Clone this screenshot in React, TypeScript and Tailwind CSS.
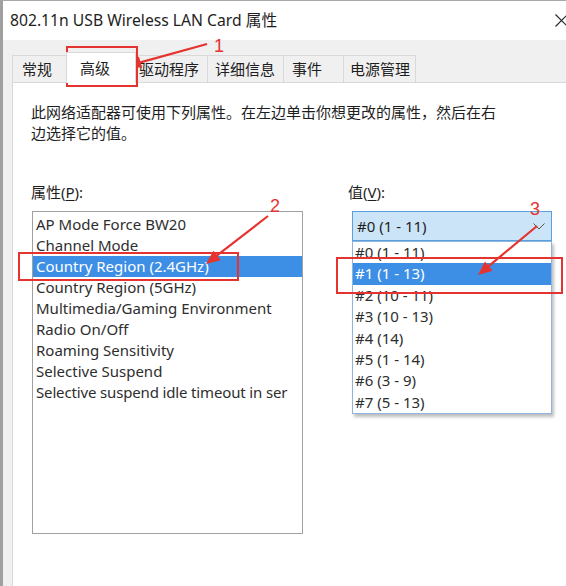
import React from "react";

type Arrow = { sx: number; sy: number; tx: number; ty: number };

function ArrowShape({ sx, sy, tx, ty }: Arrow) {
  const dx = tx - sx;
  const dy = ty - sy;
  const len = Math.hypot(dx, dy);
  const ux = dx / len;
  const uy = dy / len;
  const px = -uy;
  const py = ux;
  const hl = 14;
  const hw = 6;
  const bx = tx - hl * ux;
  const by = ty - hl * uy;
  const pts = `${tx},${ty} ${bx + hw * px},${by + hw * py} ${bx - hw * px},${by - hw * py}`;
  return (
    <g>
      <line x1={sx} y1={sy} x2={bx + 2 * ux} y2={by + 2 * uy} stroke="#e5332f" strokeWidth={2.2} />
      <polygon points={pts} fill="#e5332f" />
    </g>
  );
}

const tabs = [
  { label: "常规", w: "w-[54px]", pl: "pl-[9px]" },
  { label: "高级", w: "w-[70px]", pl: "pl-[13px]", sel: true },
  { label: "驱动程序", w: "w-[71px]", pl: "pl-[2px]" },
  { label: "详细信息", w: "w-[76px]", pl: "pl-[7px]" },
  { label: "事件", w: "w-[60px]", pl: "pl-[8px]" },
  { label: "电源管理", w: "w-[73px]", pl: "pl-[6px]" },
];

const props = [
  "AP Mode Force BW20",
  "Channel Mode",
  "Country Region (2.4GHz)",
  "Country Region (5GHz)",
  "Multimedia/Gaming Environment",
  "Radio On/Off",
  "Roaming Sensitivity",
  "Selective Suspend",
  "Selective suspend idle timeout in ser",
];

const values = [
  "#0 (1 - 11)",
  "#1 (1 - 13)",
  "#2 (10 - 11)",
  "#3 (10 - 13)",
  "#4 (14)",
  "#5 (1 - 14)",
  "#6 (3 - 9)",
  "#7 (5 - 13)",
];

export default function App() {
  return (
    <div className="relative w-[566px] h-[586px] overflow-hidden bg-[#f0f0f0] border-t border-t-[#a8a8a8] border-l-[3px] border-l-[#a0a0a0] flex flex-col text-[15px] text-[#1e1e1e] font-[family-name:'Noto_Sans','Noto_Sans_CJK_SC',sans-serif]">
      {/* Title bar */}
      <div className="h-[39px] shrink-0 bg-white flex items-center pl-[7px]">
        <span className="leading-none text-[15.7px]">802.11n USB Wireless LAN Card 属性</span>
        <svg className="ml-auto mr-[-2px]" width="13" height="13" viewBox="0 0 13 13">
          <path d="M0.5 0.5 L12.5 12.5 M12.5 0.5 L0.5 12.5" stroke="#2a2a2a" strokeWidth="1.2" fill="none" />
        </svg>
      </div>

      {/* Tab strip */}
      <div className="h-[42px] shrink-0 flex items-end pl-[9px]">
        {tabs.map((t, i) =>
          t.sel ? (
            <div
              key={i}
              className={`relative z-10 ${t.w} ${t.pl} h-[31px] mb-[-1px] bg-white border-t border-l border-r border-[#d9d9d9] flex items-center`}
            >
              {t.label}
            </div>
          ) : (
            <div
              key={i}
              className={`${t.w} ${t.pl} h-[27px] bg-[#f0f0f0] border-t border-l border-[#d9d9d9] flex items-center ${
                i === tabs.length - 1 ? "border-r" : ""
              }`}
            >
              {t.label}
            </div>
          )
        )}
      </div>

      {/* Panel */}
      <div className="flex-1 ml-[9px] bg-white border-t border-l border-[#d9d9d9] pl-[18px] pt-[19px]">
        <p className="w-[472px] leading-[21px]">
          此网络适配器可使用下列属性。在左边单击你想更改的属性，然后在右边选择它的值。
        </p>

        <div className="flex mt-[38px]">
          {/* Left column */}
          <div className="flex flex-col">
            <div className="leading-[21px]">
              属性(<span className="underline underline-offset-2">P</span>):
            </div>
            <div className="ml-px mt-[8px] w-[271px] h-[323px] border border-[#a0a0a0] pt-[2px] overflow-hidden text-[#2e2e2e]">
              {props.map((p, i) => (
                <div
                  key={i}
                  className={`h-[21px] leading-[21px] pl-[3px] whitespace-nowrap ${
                    i === 2 ? "bg-[#3d8fe6] text-white" : ""
                  } ${i === 8 ? "tracking-[-0.15px]" : ""}`}
                >
                  {p}
                </div>
              ))}
            </div>
          </div>

          {/* Right column */}
          <div className="ml-[45px] flex flex-col">
            <div className="leading-[21px]">
              值(<span className="underline underline-offset-2">V</span>):
            </div>
            <div className="ml-[4px] mt-[8px] w-[200px] h-[30px] bg-[#cce4f7] border border-[#5b9fde] flex items-center pl-[4px] pr-[6px]">
              <span>#0 (1 - 11)</span>
              <svg className="ml-auto" width="12" height="7" viewBox="0 0 12 7">
                <path d="M0.5 0.5 L6 6 L11.5 0.5" stroke="#555" strokeWidth="1" fill="none" />
              </svg>
            </div>
            <div className="ml-[4px] w-[200px] border border-[#8fb4dd] bg-white shadow-[2px_3px_3px_rgba(0,0,0,0.25)] text-[#2e2e2e]">
              {values.map((v, i) => (
                <div
                  key={i}
                  className={`h-[21.4px] leading-[21.4px] px-[2px] ${i === 1 ? "bg-[#3d8fe6] text-white" : ""}`}
                >
                  {v}
                </div>
              ))}
            </div>
          </div>
        </div>
      </div>

      {/* Red annotations */}
      <svg
        className="absolute left-[-3px] top-[-1px] pointer-events-none"
        width="566"
        height="586"
        viewBox="0 0 566 586"
      >
        <rect x="67" y="47" width="70" height="39" fill="none" stroke="#e5332f" strokeWidth="2" />
        <rect x="19" y="253" width="219" height="27" fill="none" stroke="#e5332f" strokeWidth="2" />
        <rect x="337" y="258" width="225" height="35" fill="none" stroke="#e5332f" strokeWidth="2" />
        <ArrowShape sx={207} sy={44} tx={127} ty={66} />
        <ArrowShape sx={268} sy={216} tx={206} ty={264} />
        <ArrowShape sx={537} sy={226} tx={478} ty={275} />
        <text x="214" y="52" fill="#e5332f" fontSize="18" fontFamily="Liberation Sans, sans-serif">1</text>
        <text x="270" y="212" fill="#e5332f" fontSize="18" fontFamily="Liberation Sans, sans-serif">2</text>
        <text x="530" y="215" fill="#e5332f" fontSize="18" fontFamily="Liberation Sans, sans-serif">3</text>
      </svg>
    </div>
  );
}
